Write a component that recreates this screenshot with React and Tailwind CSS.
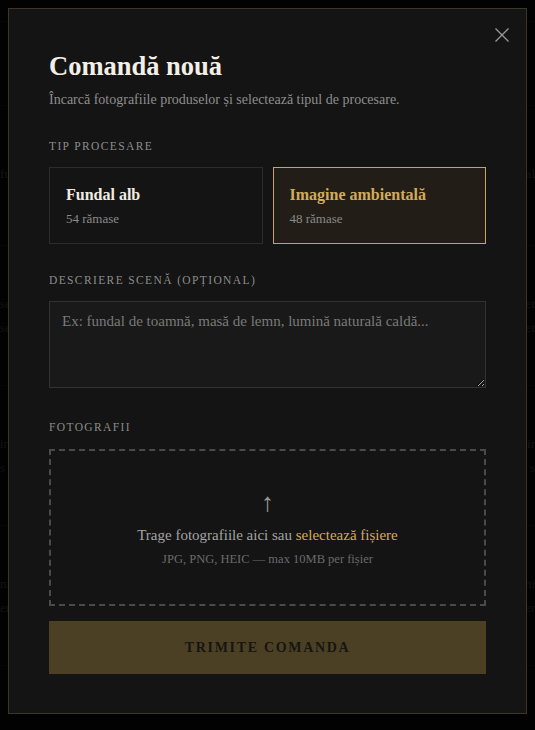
import { useState } from 'react';

const serif = { fontFamily: '"Liberation Serif", "DejaVu Serif", serif' };

// rows of the order list that sits behind the dialog
const rows = [
  { top: 'fundal', sub: '' },
  { top: 'set', sub: 'set' },
  { top: 'ir', sub: 's' },
  { top: 'ni', sub: 'er' },
];

function Backdrop() {
  return (
    <div className="h-[730px] bg-[#050505] text-[#2e2e2e] text-[13px]" style={serif}>
      <div className="h-[22px] border-b border-[#121212]" />
      <div className="h-[84px] border-b border-[#121212]" />
      {rows.map((r, i) => (
        <div key={i} className="h-[140px] border-b border-[#121212] flex flex-col justify-center gap-1">
          <div className="flex justify-between">
            <span>{r.top}</span>
            <span>{r.top}</span>
          </div>
          <div className="flex justify-between">
            <span>{r.sub}</span>
            <span>{r.sub}</span>
          </div>
        </div>
      ))}
    </div>
  );
}

function TypeCard({ title, left, active, onClick }) {
  return (
    <button
      onClick={onClick}
      className={
        active
          ? 'h-[77px] border border-[#c6a45c] bg-[#221e17] px-4 text-left flex flex-col justify-center'
          : 'h-[77px] border border-[#2c2c2c] bg-[#141414] px-4 text-left flex flex-col justify-center'
      }
    >
      <span className={active ? 'text-[16px] font-bold text-[#d2ab5b] leading-5' : 'text-[16px] font-bold text-[#f1ece2] leading-5'}>
        {title}
      </span>
      <span className="mt-1.5 text-[13px] text-[#8a8a8a] leading-4">{left} rămase</span>
    </button>
  );
}

function Label({ children }) {
  return <div className="text-[11.5px] tracking-[0.12em] text-[#8c8c8c] leading-4">{children}</div>;
}

export default function App() {
  const [type, setType] = useState('ambient');

  return (
    <div className="relative w-[535px] h-[730px] overflow-hidden bg-black">
      <Backdrop />

      <div className="absolute inset-0 bg-black/60" />

      <div
        className="absolute left-[8px] top-[8px] w-[519px] h-[706px] border border-[#3d3626] bg-[#141414] px-10 pt-[41px]"
        style={serif}
      >
        <button className="absolute right-[16px] top-[18px] text-[#9a9a9a]">
          <svg width="16" height="16" viewBox="0 0 16 16" fill="none" stroke="currentColor" strokeWidth="1.3">
            <path d="M1.5 1.5L14.5 14.5M14.5 1.5L1.5 14.5" />
          </svg>
        </button>

        <h2 className="text-[26.5px] font-bold text-[#f4efe6] leading-8">Comandă nouă</h2>
        <p className="mt-[8px] text-[14px] text-[#8e8e8e] leading-5">
          Încarcă fotografiile produselor și selectează tipul de procesare.
        </p>

        <div className="mt-[28px]">
          <Label>TIP PROCESARE</Label>
          <div className="mt-[13px] grid grid-cols-2 gap-2.5">
            <TypeCard title="Fundal alb" left={54} active={type === 'white'} onClick={() => setType('white')} />
            <TypeCard title="Imagine ambientală" left={48} active={type === 'ambient'} onClick={() => setType('ambient')} />
          </div>
        </div>

        <div className="mt-[28px]">
          <Label>DESCRIERE SCENĂ (OPȚIONAL)</Label>
          <textarea
            className="mt-[13px] block w-full h-[87px] border border-[#323232] bg-[#191919] px-3 py-2 text-[15px] text-[#cfcfcf] placeholder:text-[#7a7a7a] outline-none"
            style={serif}
            placeholder="Ex: fundal de toamnă, masă de lemn, lumină naturală caldă..."
          />
        </div>

        <div className="mt-[31px]">
          <Label>FOTOGRAFII</Label>
          <div className="mt-[14px] h-[157px] border-2 border-dashed border-[#4a4a4a] flex flex-col items-center justify-center">
            <span className="text-[26px] text-[#9a9a9a] leading-7">↑</span>
            <p className="mt-[8px] text-[15px] text-[#a3a3a3] leading-5">
              Trage fotografiile aici sau <span className="text-[#d2ab5b]">selectează fișiere</span>
            </p>
            <p className="mt-[6px] text-[12.5px] text-[#6a6a6a] leading-4">JPG, PNG, HEIC — max 10MB per fișier</p>
          </div>
        </div>

        <button className="mt-[15px] w-full h-[53px] bg-[#4b4024] text-[14px] font-bold tracking-[0.12em] text-[#171511]">
          TRIMITE COMANDA
        </button>
      </div>
    </div>
  );
}
